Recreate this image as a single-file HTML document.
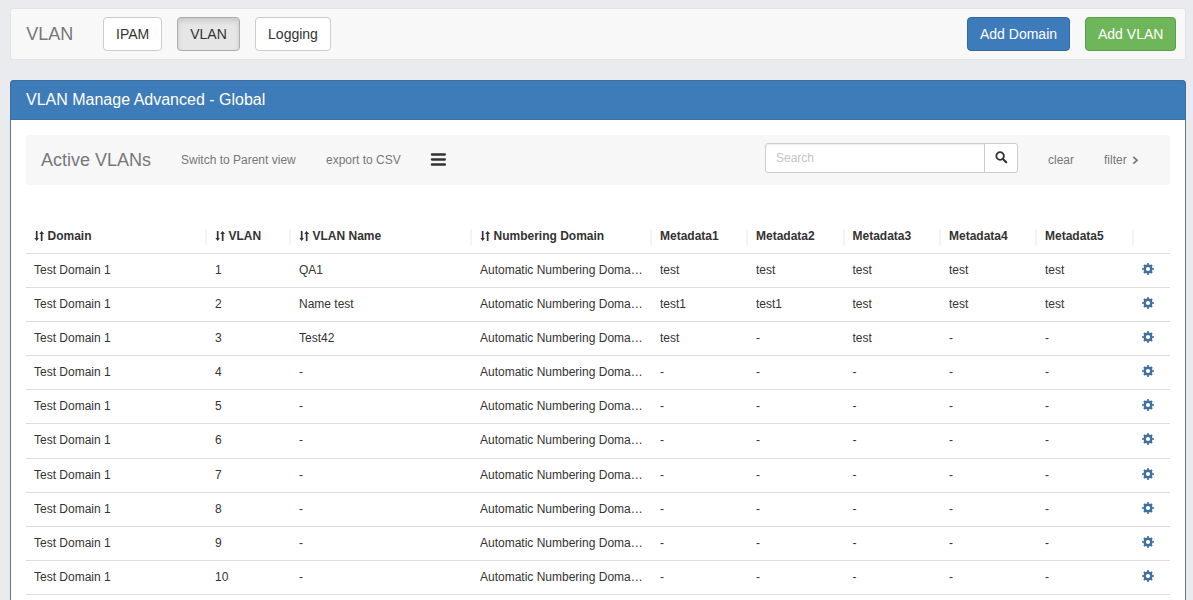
<!DOCTYPE html>
<html><head><meta charset="utf-8">
<style>
*{box-sizing:border-box}
html,body{margin:0;padding:0}
body{width:1193px;height:600px;overflow:hidden;background:#e9ebee;font-family:"Liberation Sans",sans-serif;font-size:12px;color:#333;position:relative}
.abs{position:absolute}
.navbar{left:10px;top:8px;width:1176px;height:52px;background:#f8f8f8;border:1px solid #e4e4e4;border-radius:3px}
.brand{left:15.2px;top:15px;font-size:18px;line-height:20px;color:#777;white-space:nowrap}
.btn{position:absolute;top:8px;height:34px;border:1px solid #ccc;border-radius:4px;background:#fff;color:#333;font-size:14px;line-height:20px;padding:6px 12px;white-space:nowrap;text-align:center}
.btn.active{background:#e6e6e6;border-color:#adadad;box-shadow:inset 0 3px 5px rgba(0,0,0,.125)}
.btn.primary{background:#3e7bba;border-color:#34679b;color:#fff}
.btn.success{background:#6fb65a;border-color:#5d9d4b;color:#fff}
.panel{left:10px;top:80px;width:1176px;height:540px;background:#fff;border:1px solid #5f778a;border-radius:4px}
.panel-head{position:absolute;left:-1px;top:-1px;right:-1px;height:40px;background:#3e7cb9;border:1px solid #3e6c9c;border-bottom-color:#436f9b;border-radius:4px 4px 0 0}
.panel-title{position:absolute;left:15px;top:10px;font-size:16px;line-height:17.6px;color:#fff;white-space:nowrap}
.well{left:15px;top:54px;width:1144px;height:50px;background:#f7f7f7;border-radius:3px}
.wt{position:absolute;white-space:nowrap;color:#777}
table{position:absolute;left:15px;top:139px;width:1144px;border-collapse:collapse;table-layout:fixed}
th,td{padding:8px;line-height:17px;text-align:left;white-space:nowrap;overflow:hidden;text-overflow:ellipsis;font-size:12px}
th{font-weight:bold;border-bottom:1px solid #ddd;position:relative;overflow:visible}
td{border-bottom:1px solid #ddd}

th.s{padding-left:21.5px}
.si{position:absolute;left:8px;top:11.14px}
th.sep::before{content:"";position:absolute;left:-2px;top:9px;width:2px;height:16px;background:#f4f4f4}
td.gc{position:relative;overflow:visible}
.gear{position:absolute;left:7px;top:7.8px}

.search{left:739px;top:8px;width:220px;height:30px;background:#fff;border:1px solid #ccc;border-radius:3px 0 0 3px;box-shadow:inset 0 1px 1px rgba(0,0,0,.075)}
.ph{position:absolute;left:10px;top:6px;line-height:17px;color:#c4c4c4;font-size:12px}
.sbtn{left:958px;top:8px;width:34px;height:30px;background:#fff;border:1px solid #ccc;border-radius:0 3px 3px 0}
tr.r6 td{padding-bottom:9px}
</style></head><body>
<div class="abs navbar">
  <div class="abs brand">VLAN</div>
  <div class="btn" style="left:92px;width:59px">IPAM</div>
  <div class="btn active" style="left:166px;width:63px">VLAN</div>
  <div class="btn" style="left:244px;width:76px">Logging</div>
  <div class="btn primary" style="left:956px;width:103px">Add Domain</div>
  <div class="btn success" style="left:1074px;width:91px">Add VLAN</div>
</div>
<div class="abs panel">
  <div class="panel-head"><div class="panel-title">VLAN Manage Advanced - Global</div></div>
  <div class="abs well">
    <div class="wt" style="left:15px;top:15px;font-size:18px;line-height:20px">Active VLANs</div>
    <div class="wt" style="left:155px;top:17px;line-height:17px">Switch to Parent view</div>
    <div class="wt" style="left:300px;top:17px;line-height:17px">export to CSV</div>
    <svg class="abs" style="left:404px;top:18px" width="16" height="13" viewBox="0 0 16 13"><rect x="0.8" y="0.2" width="15.2" height="2.5" rx="1.1" fill="#333"/><rect x="0.8" y="5.2" width="15.2" height="2.5" rx="1.1" fill="#333"/><rect x="0.8" y="10.3" width="15.2" height="2.5" rx="1.1" fill="#333"/></svg>
    <div class="abs search"><span class="ph">Search</span></div>
    <div class="abs sbtn"><svg class="abs" style="left:10px;top:7px" width="13" height="13" viewBox="0 0 13 13"><circle cx="5.1" cy="5" r="3.8" fill="none" stroke="#333" stroke-width="1.8"/><path d="M7.9 7.9L11.2 11.2" stroke="#333" stroke-width="2.1" stroke-linecap="round"/></svg></div>
    <div class="wt" style="left:1022px;top:17px;line-height:17px">clear</div>
    <div class="wt" style="left:1078px;top:17px;line-height:17px">filter</div>
    <svg class="abs" style="left:1106px;top:21px" width="7" height="9" viewBox="0 0 7 9"><path d="M1.3 0.9L5.1 4.3L1.3 7.7" fill="none" stroke="#777" stroke-width="1.7"/></svg>
  </div>
  <table>
    <colgroup><col style="width:181px"><col style="width:84px"><col style="width:181px"><col style="width:180px"><col style="width:96px"><col style="width:96.5px"><col style="width:96.5px"><col style="width:96px"><col style="width:97px"><col style="width:36px"></colgroup>
    <thead><tr><th class="s"><svg class="si" width="11" height="11" viewBox="0 0 11 11"><path d="M1.85 0H3.55V7.1H4.9L2.7 9.9L0.4 7.1H1.85Z M6.8 10H8.5V2.9H10.1L7.65 0L5.2 2.9H6.8Z" fill="#333"/></svg>Domain</th><th class="s sep"><svg class="si" width="11" height="11" viewBox="0 0 11 11"><path d="M1.85 0H3.55V7.1H4.9L2.7 9.9L0.4 7.1H1.85Z M6.8 10H8.5V2.9H10.1L7.65 0L5.2 2.9H6.8Z" fill="#333"/></svg>VLAN</th><th class="s sep"><svg class="si" width="11" height="11" viewBox="0 0 11 11"><path d="M1.85 0H3.55V7.1H4.9L2.7 9.9L0.4 7.1H1.85Z M6.8 10H8.5V2.9H10.1L7.65 0L5.2 2.9H6.8Z" fill="#333"/></svg>VLAN Name</th><th class="s sep"><svg class="si" width="11" height="11" viewBox="0 0 11 11"><path d="M1.85 0H3.55V7.1H4.9L2.7 9.9L0.4 7.1H1.85Z M6.8 10H8.5V2.9H10.1L7.65 0L5.2 2.9H6.8Z" fill="#333"/></svg>Numbering Domain</th><th class="sep">Metadata1</th><th class="sep">Metadata2</th><th class="sep">Metadata3</th><th class="sep">Metadata4</th><th class="sep">Metadata5</th><th class="sep"></th></tr></thead>
    <tbody>
    <tr><td>Test Domain 1</td><td>1</td><td>QA1</td><td>Automatic Numbering Doma…</td><td>test</td><td>test</td><td>test</td><td>test</td><td>test</td><td class="gc"><svg width="14" height="14" viewBox="0 0 14 14" class="gear"><path fill-rule="evenodd" fill="#41709f" d="M6.20 2.47 L6.20 1.00 L7.80 1.00 L7.80 2.47 L9.47 3.12 L10.32 2.26 L11.74 3.68 L10.88 4.53 L11.53 6.20 L13.00 6.20 L13.00 7.80 L11.53 7.80 L10.88 9.47 L11.74 10.32 L10.32 11.74 L9.47 10.88 L7.80 11.53 L7.80 13.00 L6.20 13.00 L6.20 11.53 L4.53 10.88 L3.68 11.74 L2.26 10.32 L3.12 9.47 L2.47 7.80 L1.00 7.80 L1.00 6.20 L2.47 6.20 L3.12 4.53 L2.26 3.68 L3.68 2.26 L4.53 3.12Z M9.1 7A2.1 2.1 0 1 0 4.9 7A2.1 2.1 0 1 0 9.1 7Z"/></svg></td></tr>
    <tr><td>Test Domain 1</td><td>2</td><td>Name test</td><td>Automatic Numbering Doma…</td><td>test1</td><td>test1</td><td>test</td><td>test</td><td>test</td><td class="gc"><svg width="14" height="14" viewBox="0 0 14 14" class="gear"><path fill-rule="evenodd" fill="#41709f" d="M6.20 2.47 L6.20 1.00 L7.80 1.00 L7.80 2.47 L9.47 3.12 L10.32 2.26 L11.74 3.68 L10.88 4.53 L11.53 6.20 L13.00 6.20 L13.00 7.80 L11.53 7.80 L10.88 9.47 L11.74 10.32 L10.32 11.74 L9.47 10.88 L7.80 11.53 L7.80 13.00 L6.20 13.00 L6.20 11.53 L4.53 10.88 L3.68 11.74 L2.26 10.32 L3.12 9.47 L2.47 7.80 L1.00 7.80 L1.00 6.20 L2.47 6.20 L3.12 4.53 L2.26 3.68 L3.68 2.26 L4.53 3.12Z M9.1 7A2.1 2.1 0 1 0 4.9 7A2.1 2.1 0 1 0 9.1 7Z"/></svg></td></tr>
    <tr><td>Test Domain 1</td><td>3</td><td>Test42</td><td>Automatic Numbering Doma…</td><td>test</td><td>-</td><td>test</td><td>-</td><td>-</td><td class="gc"><svg width="14" height="14" viewBox="0 0 14 14" class="gear"><path fill-rule="evenodd" fill="#41709f" d="M6.20 2.47 L6.20 1.00 L7.80 1.00 L7.80 2.47 L9.47 3.12 L10.32 2.26 L11.74 3.68 L10.88 4.53 L11.53 6.20 L13.00 6.20 L13.00 7.80 L11.53 7.80 L10.88 9.47 L11.74 10.32 L10.32 11.74 L9.47 10.88 L7.80 11.53 L7.80 13.00 L6.20 13.00 L6.20 11.53 L4.53 10.88 L3.68 11.74 L2.26 10.32 L3.12 9.47 L2.47 7.80 L1.00 7.80 L1.00 6.20 L2.47 6.20 L3.12 4.53 L2.26 3.68 L3.68 2.26 L4.53 3.12Z M9.1 7A2.1 2.1 0 1 0 4.9 7A2.1 2.1 0 1 0 9.1 7Z"/></svg></td></tr>
    <tr><td>Test Domain 1</td><td>4</td><td>-</td><td>Automatic Numbering Doma…</td><td>-</td><td>-</td><td>-</td><td>-</td><td>-</td><td class="gc"><svg width="14" height="14" viewBox="0 0 14 14" class="gear"><path fill-rule="evenodd" fill="#41709f" d="M6.20 2.47 L6.20 1.00 L7.80 1.00 L7.80 2.47 L9.47 3.12 L10.32 2.26 L11.74 3.68 L10.88 4.53 L11.53 6.20 L13.00 6.20 L13.00 7.80 L11.53 7.80 L10.88 9.47 L11.74 10.32 L10.32 11.74 L9.47 10.88 L7.80 11.53 L7.80 13.00 L6.20 13.00 L6.20 11.53 L4.53 10.88 L3.68 11.74 L2.26 10.32 L3.12 9.47 L2.47 7.80 L1.00 7.80 L1.00 6.20 L2.47 6.20 L3.12 4.53 L2.26 3.68 L3.68 2.26 L4.53 3.12Z M9.1 7A2.1 2.1 0 1 0 4.9 7A2.1 2.1 0 1 0 9.1 7Z"/></svg></td></tr>
    <tr><td>Test Domain 1</td><td>5</td><td>-</td><td>Automatic Numbering Doma…</td><td>-</td><td>-</td><td>-</td><td>-</td><td>-</td><td class="gc"><svg width="14" height="14" viewBox="0 0 14 14" class="gear"><path fill-rule="evenodd" fill="#41709f" d="M6.20 2.47 L6.20 1.00 L7.80 1.00 L7.80 2.47 L9.47 3.12 L10.32 2.26 L11.74 3.68 L10.88 4.53 L11.53 6.20 L13.00 6.20 L13.00 7.80 L11.53 7.80 L10.88 9.47 L11.74 10.32 L10.32 11.74 L9.47 10.88 L7.80 11.53 L7.80 13.00 L6.20 13.00 L6.20 11.53 L4.53 10.88 L3.68 11.74 L2.26 10.32 L3.12 9.47 L2.47 7.80 L1.00 7.80 L1.00 6.20 L2.47 6.20 L3.12 4.53 L2.26 3.68 L3.68 2.26 L4.53 3.12Z M9.1 7A2.1 2.1 0 1 0 4.9 7A2.1 2.1 0 1 0 9.1 7Z"/></svg></td></tr>
    <tr class="r6"><td>Test Domain 1</td><td>6</td><td>-</td><td>Automatic Numbering Doma…</td><td>-</td><td>-</td><td>-</td><td>-</td><td>-</td><td class="gc"><svg width="14" height="14" viewBox="0 0 14 14" class="gear"><path fill-rule="evenodd" fill="#41709f" d="M6.20 2.47 L6.20 1.00 L7.80 1.00 L7.80 2.47 L9.47 3.12 L10.32 2.26 L11.74 3.68 L10.88 4.53 L11.53 6.20 L13.00 6.20 L13.00 7.80 L11.53 7.80 L10.88 9.47 L11.74 10.32 L10.32 11.74 L9.47 10.88 L7.80 11.53 L7.80 13.00 L6.20 13.00 L6.20 11.53 L4.53 10.88 L3.68 11.74 L2.26 10.32 L3.12 9.47 L2.47 7.80 L1.00 7.80 L1.00 6.20 L2.47 6.20 L3.12 4.53 L2.26 3.68 L3.68 2.26 L4.53 3.12Z M9.1 7A2.1 2.1 0 1 0 4.9 7A2.1 2.1 0 1 0 9.1 7Z"/></svg></td></tr>
    <tr><td>Test Domain 1</td><td>7</td><td>-</td><td>Automatic Numbering Doma…</td><td>-</td><td>-</td><td>-</td><td>-</td><td>-</td><td class="gc"><svg width="14" height="14" viewBox="0 0 14 14" class="gear"><path fill-rule="evenodd" fill="#41709f" d="M6.20 2.47 L6.20 1.00 L7.80 1.00 L7.80 2.47 L9.47 3.12 L10.32 2.26 L11.74 3.68 L10.88 4.53 L11.53 6.20 L13.00 6.20 L13.00 7.80 L11.53 7.80 L10.88 9.47 L11.74 10.32 L10.32 11.74 L9.47 10.88 L7.80 11.53 L7.80 13.00 L6.20 13.00 L6.20 11.53 L4.53 10.88 L3.68 11.74 L2.26 10.32 L3.12 9.47 L2.47 7.80 L1.00 7.80 L1.00 6.20 L2.47 6.20 L3.12 4.53 L2.26 3.68 L3.68 2.26 L4.53 3.12Z M9.1 7A2.1 2.1 0 1 0 4.9 7A2.1 2.1 0 1 0 9.1 7Z"/></svg></td></tr>
    <tr><td>Test Domain 1</td><td>8</td><td>-</td><td>Automatic Numbering Doma…</td><td>-</td><td>-</td><td>-</td><td>-</td><td>-</td><td class="gc"><svg width="14" height="14" viewBox="0 0 14 14" class="gear"><path fill-rule="evenodd" fill="#41709f" d="M6.20 2.47 L6.20 1.00 L7.80 1.00 L7.80 2.47 L9.47 3.12 L10.32 2.26 L11.74 3.68 L10.88 4.53 L11.53 6.20 L13.00 6.20 L13.00 7.80 L11.53 7.80 L10.88 9.47 L11.74 10.32 L10.32 11.74 L9.47 10.88 L7.80 11.53 L7.80 13.00 L6.20 13.00 L6.20 11.53 L4.53 10.88 L3.68 11.74 L2.26 10.32 L3.12 9.47 L2.47 7.80 L1.00 7.80 L1.00 6.20 L2.47 6.20 L3.12 4.53 L2.26 3.68 L3.68 2.26 L4.53 3.12Z M9.1 7A2.1 2.1 0 1 0 4.9 7A2.1 2.1 0 1 0 9.1 7Z"/></svg></td></tr>
    <tr><td>Test Domain 1</td><td>9</td><td>-</td><td>Automatic Numbering Doma…</td><td>-</td><td>-</td><td>-</td><td>-</td><td>-</td><td class="gc"><svg width="14" height="14" viewBox="0 0 14 14" class="gear"><path fill-rule="evenodd" fill="#41709f" d="M6.20 2.47 L6.20 1.00 L7.80 1.00 L7.80 2.47 L9.47 3.12 L10.32 2.26 L11.74 3.68 L10.88 4.53 L11.53 6.20 L13.00 6.20 L13.00 7.80 L11.53 7.80 L10.88 9.47 L11.74 10.32 L10.32 11.74 L9.47 10.88 L7.80 11.53 L7.80 13.00 L6.20 13.00 L6.20 11.53 L4.53 10.88 L3.68 11.74 L2.26 10.32 L3.12 9.47 L2.47 7.80 L1.00 7.80 L1.00 6.20 L2.47 6.20 L3.12 4.53 L2.26 3.68 L3.68 2.26 L4.53 3.12Z M9.1 7A2.1 2.1 0 1 0 4.9 7A2.1 2.1 0 1 0 9.1 7Z"/></svg></td></tr>
    <tr><td>Test Domain 1</td><td>10</td><td>-</td><td>Automatic Numbering Doma…</td><td>-</td><td>-</td><td>-</td><td>-</td><td>-</td><td class="gc"><svg width="14" height="14" viewBox="0 0 14 14" class="gear"><path fill-rule="evenodd" fill="#41709f" d="M6.20 2.47 L6.20 1.00 L7.80 1.00 L7.80 2.47 L9.47 3.12 L10.32 2.26 L11.74 3.68 L10.88 4.53 L11.53 6.20 L13.00 6.20 L13.00 7.80 L11.53 7.80 L10.88 9.47 L11.74 10.32 L10.32 11.74 L9.47 10.88 L7.80 11.53 L7.80 13.00 L6.20 13.00 L6.20 11.53 L4.53 10.88 L3.68 11.74 L2.26 10.32 L3.12 9.47 L2.47 7.80 L1.00 7.80 L1.00 6.20 L2.47 6.20 L3.12 4.53 L2.26 3.68 L3.68 2.26 L4.53 3.12Z M9.1 7A2.1 2.1 0 1 0 4.9 7A2.1 2.1 0 1 0 9.1 7Z"/></svg></td></tr>
    </tbody>
  </table>
</div>
</body></html>
